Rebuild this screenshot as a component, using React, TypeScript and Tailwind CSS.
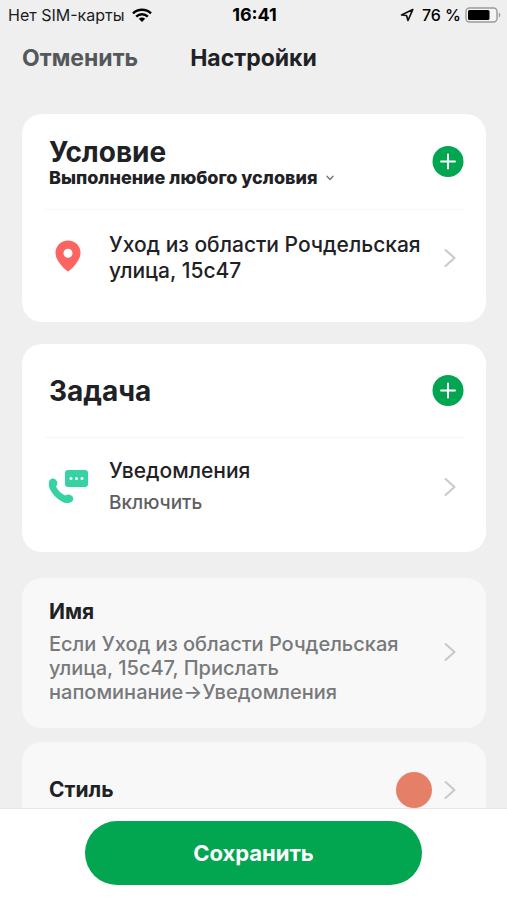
import React from "react";

function Chevron() {
  return (
    <svg viewBox="0 0 12 20" className="h-5 w-3 shrink-0" fill="none" stroke="#c9c9cc" strokeWidth="2" strokeLinecap="round" strokeLinejoin="round" aria-hidden="true">
      <path d="M1.5 2 10.5 10 1.5 18" />
    </svg>
  );
}

function AddButton({ label }: { label: string }) {
  return (
    <button type="button" aria-label={label} className="flex h-8 w-8 shrink-0 items-center justify-center">
      <svg viewBox="0 0 32 32" className="h-8 w-8" aria-hidden="true">
        <circle cx="16" cy="15.5" r="15.5" fill="#03a650" />
        <path d="M16 8.500v14M9 15.500h14" stroke="#fff" strokeWidth="2" strokeLinecap="round" />
      </svg>
    </button>
  );
}

function StatusBar() {
  return (
    <div className="grid h-[30px] grid-cols-[1fr_auto_1fr] items-center pr-1.5 pl-2 text-base text-[#1b1c1e]">
      <div className="flex items-center gap-2">
        <span>Нет SIM-карты</span>
        <svg viewBox="0 0 20 14" className="h-[14px] w-5" aria-hidden="true">
          <g fill="none" stroke="#000" strokeWidth="2.5">
            <path d="M1 5.3C6 .4 14 .4 19 5.3" />
            <path d="M4.2 8.6c3.3-3.2 8.3-3.2 11.6 0" />
          </g>
          <path d="M10 14 6.8 10.8c1.8-1.7 4.6-1.7 6.4 0z" fill="#000" />
        </svg>
      </div>
      <span className="text-lg font-bold text-black">16:41</span>
      <div className="flex items-center justify-end gap-2 font-medium text-black">
        <svg viewBox="0 0 14 14" className="h-[14px] w-[14px]" fill="none" stroke="#111" strokeWidth="1.7" strokeLinejoin="round" aria-hidden="true">
          <path d="M12.800 1.500 1.500 7l5 .5 1.500 5z" />
        </svg>
        <span className="-mr-1">76 %</span>
        <svg viewBox="0 0 36 16" className="h-4 w-9" aria-hidden="true">
          <rect x="1" y="1" width="31" height="14" rx="3.5" fill="#f5f5f5" stroke="#9b9b9b" strokeWidth="1.4" />
          <rect x="3" y="3" width="21.5" height="10" rx="1.5" fill="#000" />
          <path d="M33.8 5.5c2 .8 2 4.2 0 5z" fill="#9b9b9b" />
        </svg>
      </div>
    </div>
  );
}

export default function App() {
  return (
    <div className="flex h-screen flex-col bg-[#efefef] font-[Inter,'Liberation_Sans',sans-serif] text-[#1f2225]">
      <StatusBar />
      <header className="grid grid-cols-[1fr_auto_1fr] items-center px-[22px] pt-[9px] pb-[29px] text-[23px] leading-[38px] font-bold">
        <button type="button" className="justify-self-start text-[#54585a]">Отменить</button>
        <h1>Настройки</h1>
      </header>

      <main className="flex min-h-0 flex-1 flex-col overflow-y-auto pt-2 pr-[21px] pl-[22px] [scrollbar-width:none]">
        <section className="mb-[22px] shrink-0 rounded-[20px] bg-white px-[22px]">
          <div className="flex h-24 items-center justify-between border-b border-[#f7f7f7] pl-[5px]">
            <div>
              <h2 className="text-[28px] leading-8 font-bold">Условие</h2>
              <div className="flex h-5 items-center gap-2">
                <select aria-label="Тип условия" className="appearance-none bg-transparent text-lg leading-5 font-extrabold">
                  <option>Выполнение любого условия</option>
                </select>
                <svg viewBox="0 0 8 6" className="h-[6px] w-2" fill="none" stroke="#777" strokeWidth="1.4" strokeLinecap="round" strokeLinejoin="round" aria-hidden="true">
                  <path d="M1 1.2 4 4.4 7 1.2" />
                </svg>
              </div>
            </div>
            <AddButton label="Добавить условие" />
          </div>
          <button type="button" className="flex h-28 w-full items-center pr-2 pb-4 text-left">
            <svg viewBox="0 0 26 36" className="ml-[11px] h-9 w-[26px] shrink-0" aria-hidden="true">
              <path fillRule="evenodd" d="M13 .5C6 .5.5 6 .5 12.8c0 4.5 2.5 8.600 5.300 12 2.300 2.800 4.700 4.900 6.300 6.300.5.500 1.300.500 1.800 0 1.600-1.400 4-3.500 6.300-6.300 2.800-3.400 5.300-7.500 5.300-12C25.500 6 20 .5 13 .5Zm0 8.300a4.500 4.500 0 1 1 0 9 4.500 4.500 0 0 1 0-9Z" fill="#fb6460" />
            </svg>
            <span className="ml-7 flex-1 text-[21px] leading-[26px] font-medium">Уход из области Рочдельская улица, 15с47</span>
            <Chevron />
          </button>
        </section>

        <section className="mb-[26px] shrink-0 rounded-[20px] bg-white px-[22px]">
          <div className="flex h-[94px] items-center justify-between border-b border-[#f7f7f7] pl-[5px]">
            <h2 className="text-[28px] leading-8 font-bold">Задача</h2>
            <AddButton label="Добавить задачу" />
          </div>
          <button type="button" className="flex h-[114px] w-full items-center pr-2 pb-4 text-left">
            <svg viewBox="0 0 40 36" className="ml-1 h-9 w-10 shrink-0" aria-hidden="true">
              <rect x="17" y="1" width="23" height="17" rx="3" fill="#36d2a3" />
              <g fill="#fff">
                <circle cx="23" cy="9.500" r="1.500" />
                <circle cx="28.500" cy="9.500" r="1.500" />
                <circle cx="34" cy="9.500" r="1.500" />
              </g>
              <path d="M1.200 12.200C2 9.500 6 8.500 8.200 11.200c1.700 2.100 1.500 4-.2 6.300 1.800 3.800 5 7 9 9 2.200-1.400 4.500-1.400 6.600.2 2.600 2 2.100 4.900-.3 6.300-2.800 1.700-6.100 1.500-9-.2C7.800 29 3 23.800 1.200 18c-.6-2-.6-4 0-5.800Z" fill="#36d2a3" />
            </svg>
            <span className="ml-[21px] flex-1">
              <span className="block text-[21px] leading-8 font-medium">Уведомления</span>
              <span className="block text-[19px] leading-8 font-medium text-[#5d6062]">Включить</span>
            </span>
            <Chevron />
          </button>
        </section>

        <button type="button" className="mb-[14px] flex shrink-0 items-center rounded-[20px] bg-[#f8f8f8] pt-[22px] pr-[30px] pb-6 pl-[27px] text-left">
          <span className="flex-1">
            <span className="mb-2 block text-[21px] leading-6 font-bold">Имя</span>
            <span className="block text-[20px] leading-6 font-medium text-[#77797b]">
              Если Уход из области Рочдельская улица, 15с47, Прислать напоминание→Уведомления
            </span>
          </span>
          <Chevron />
        </button>

        <button type="button" className="flex h-24 shrink-0 items-center rounded-[20px] bg-[#f8f8f8] pr-[30px] pl-[27px] text-left text-[21px] font-bold">
          <span className="flex-1">Стиль</span>
          <span className="mr-3 h-9 w-9 rounded-full bg-[#e57f68]" />
          <Chevron />
        </button>
      </main>

      <footer className="flex justify-center border-t border-[#e7e7e7] bg-white px-[85px] pt-3 pb-[15px]">
        <button type="button" className="h-16 w-full rounded-full bg-[#03a650] text-[22px] font-bold text-white">Сохранить</button>
      </footer>
    </div>
  );
}
